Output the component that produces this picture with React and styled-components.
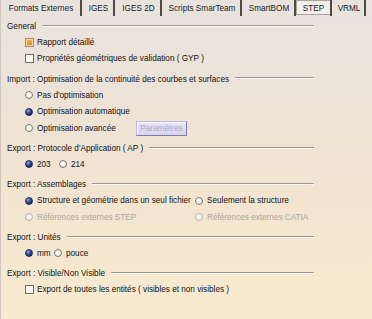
import React from 'react'
import styled, { createGlobalStyle, css } from 'styled-components'

const GlobalStyle = createGlobalStyle`
    html, body {
        margin: 0;
        padding: 0;
    }
    body {
        font-family: 'Liberation Sans', Arial, sans-serif;
    }
`

const tabs = [
    { label: 'Formats Externes', width: 82 },
    { label: 'IGES', width: 33 },
    { label: 'IGES 2D', width: 47 },
    { label: 'Scripts SmarTeam', width: 80 },
    { label: 'SmartBOM', width: 54 },
    { label: 'STEP', width: 36, active: true },
    { label: 'VRML', width: 34 },
]

const App = () => {
    return (
        <>
            <GlobalStyle />
            <Page>
                <TabBar>
                    {tabs.map((t) => (
                        <Tab key={t.label} $w={t.width} $active={t.active}>
                            <TabLabel $active={t.active}>{t.label}</TabLabel>
                        </Tab>
                    ))}
                </TabBar>

                <Content>
                    <Group>
                        <Header>
                            <span>General</span>
                            <Rule />
                        </Header>
                        <Row>
                            <Check $state="partial" />
                            <Label>Rapport détaillé</Label>
                        </Row>
                        <Row>
                            <Check />
                            <Label>Propriétés géométriques de validation ( GYP )</Label>
                        </Row>
                    </Group>

                    <Group>
                        <Header>
                            <span>Import : Optimisation de la continuité des courbes et surfaces</span>
                            <Rule />
                        </Header>
                        <Row>
                            <Radio />
                            <Label>Pas d'optimisation</Label>
                        </Row>
                        <Row>
                            <Radio $on />
                            <Label>Optimisation automatique</Label>
                        </Row>
                        <Row>
                            <Radio />
                            <Label $w={99}>Optimisation avancée</Label>
                            <ParamButton disabled>Paramètres</ParamButton>
                        </Row>
                    </Group>

                    <Group>
                        <Header>
                            <span>Export : Protocole d'Application ( AP )</span>
                            <Rule />
                        </Header>
                        <Row>
                            <Radio $on />
                            <Label $w={22}>203</Label>
                            <Radio />
                            <Label>214</Label>
                        </Row>
                    </Group>

                    <Group>
                        <Header>
                            <span>Export : Assemblages</span>
                            <Rule />
                        </Header>
                        <Row>
                            <Radio $on />
                            <Label $w={158}>Structure et géométrie dans un seul fichier</Label>
                            <Radio />
                            <Label>Seulement la structure</Label>
                        </Row>
                        <Row>
                            <Radio $disabled />
                            <Label $w={158} $disabled>Références externes STEP</Label>
                            <Radio $disabled />
                            <Label $disabled>Références externes CATIA</Label>
                        </Row>
                    </Group>

                    <Group>
                        <Header>
                            <span>Export : Unités</span>
                            <Rule />
                        </Header>
                        <Row>
                            <Radio $on />
                            <Label $w={17}>mm</Label>
                            <Radio />
                            <Label>pouce</Label>
                        </Row>
                    </Group>

                    <Group>
                        <Header>
                            <span>Export : Visible/Non Visible</span>
                            <Rule />
                        </Header>
                        <Row>
                            <Check />
                            <Label>Export de toutes les entités ( visibles et non visibles )</Label>
                        </Row>
                    </Group>
                </Content>
            </Page>
        </>
    )
}

export default App

const Page = styled.div`
    width: 372px;
    height: 319px;
    box-sizing: border-box;
    overflow: hidden;
    border-left: 1px solid #cfc6bd;
    background: linear-gradient(180deg, #e9e3de 0%, #eee2d6 35%, #f3e5d0 65%, #f8ebcf 100%);
    color: #111;
    font-size: 8.2px;
`

const TabBar = styled.div`
    display: flex;
    height: 17px;
    margin-left: -1px;
`

const Tab = styled.div`
    width: ${(p) => p.$w}px;
    height: 17px;
    box-sizing: border-box;
    display: flex;
    align-items: flex-start;
    justify-content: center;
    padding-top: ${(p) => (p.$active ? '0' : '2px')};
    position: relative;

    &::after {
        content: '';
        position: absolute;
        right: 0;
        top: 0;
        width: 2px;
        height: 16px;
        background: #4e4a46;
    }
`

const TabLabel = styled.div`
    height: 14px;
    line-height: 14px;
    box-sizing: border-box;
    font-size: 8.2px;
    color: #1a1a1a;
    ${(p) =>
        p.$active &&
        css`
            width: 34px;
            margin-right: 2px;
            height: 15px;
            line-height: 15px;
            text-align: center;
            background: #f3efeb;
            border: 1px solid #a9a39d;
            border-right: none;
        `}
`

const Content = styled.div`
    padding: 2px 0 0 6px;
    width: 307px;
`

const Group = styled.div`
    margin-bottom: 4.75px;
`

const Header = styled.div`
    height: 15px;
    display: flex;
    align-items: center;

    span {
        white-space: nowrap;
    }
`

const Rule = styled.div`
    flex: 1;
    margin-left: 6px;
    margin-top: -2px;
    height: 1px;
    background: #9f9891;
    border-bottom: 1px solid #fbf8f4;
`

const Row = styled.div`
    height: 16.5px;
    display: flex;
    align-items: center;
    padding-left: 18px;
`

const Label = styled.span`
    white-space: nowrap;
    width: ${(p) => (p.$w ? `${p.$w}px` : 'auto')};
    color: ${(p) => (p.$disabled ? '#ada59d' : '#111')};
`

const Radio = styled.span`
    flex: none;
    width: 8px;
    height: 8px;
    box-sizing: border-box;
    border-radius: 50%;
    margin-right: 4px;
    ${(p) =>
        p.$on
            ? css`
                  background: radial-gradient(circle at 35% 30%, #9fb6e6 0%, #3a5aa6 35%, #13245c 75%, #0a1538 100%);
                  border: 1px solid #1c2c5e;
              `
            : css`
                  background: radial-gradient(circle at 40% 35%, #ffffff 0%, #f3f1e6 60%, #dedbd0 100%);
                  border: 1px solid ${p.$disabled ? '#b8b2aa' : '#7c7870'};
              `}
`

const Check = styled.span`
    flex: none;
    width: 9px;
    height: 9px;
    box-sizing: border-box;
    margin-right: 3px;
    border: 1px solid #6f6c68;
    background: #fdfbf2;
    ${(p) =>
        p.$state === 'partial' &&
        css`
            border: 1px solid #b58a5a;
            background: linear-gradient(180deg, #f8c070 0%, #ee9a30 50%, #e07a14 100%);
            box-shadow: inset 0 0 0 1px #f7d8a8;
        `}
`

const ParamButton = styled.button`
    width: 51px;
    height: 15px;
    padding: 0;
    margin: 0;
    box-sizing: border-box;
    font-family: inherit;
    font-size: 8.2px;
    color: #a7a6cb;
    background: linear-gradient(180deg, #e8e6f6 0%, #d9d6ee 100%);
    border: 1px solid #bcb9dc;
    border-right-color: #7f7da8;
    border-bottom-color: #7f7da8;
    box-shadow: inset 1px 1px 0 #f8f7ff;
`
